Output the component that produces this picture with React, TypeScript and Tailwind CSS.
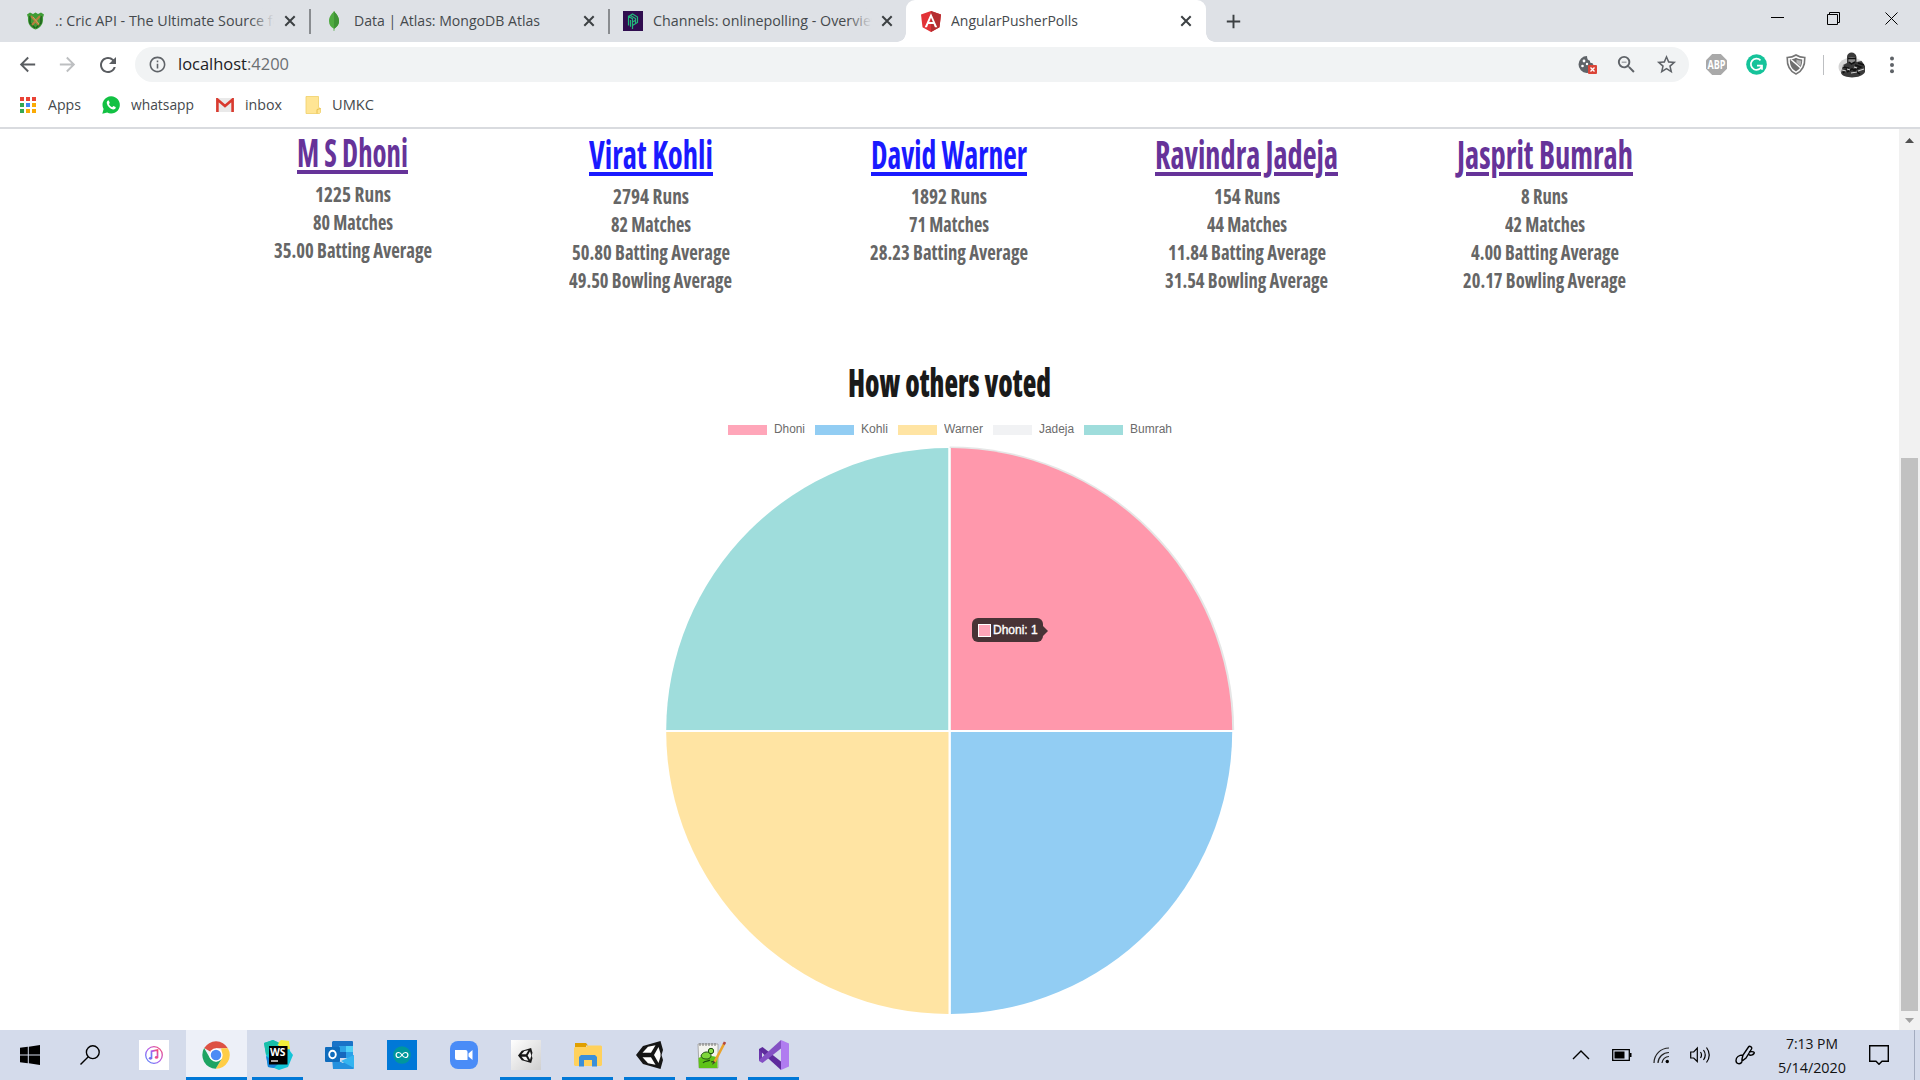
import { useLayoutEffect, useRef, useState, type ReactNode } from "react";
import { MdArrowBack, MdArrowForward, MdRefresh, MdStarBorder, MdZoomOut, MdInfoOutline, MdAdd } from "react-icons/md";

/* Text squeezed or stretched horizontally to an exact width. */
function Fit({ w, className = "", children }: { w: number; className?: string; children: ReactNode }) {
  const ref = useRef<HTMLSpanElement>(null);
  const [k, setK] = useState(1);
  useLayoutEffect(() => {
    if (ref.current && ref.current.offsetWidth) setK(w / ref.current.getBoundingClientRect().width);
  }, []);
  return (
    <span className="block shrink-0" style={{ width: w }}>
      <span ref={ref} className={"inline-block origin-left whitespace-nowrap " + className} style={{ transform: `scaleX(${k})` }}>
        {children}
      </span>
    </span>
  );
}

const UI = "font-['Open_Sans','Noto_Sans',sans-serif]";
const COND = "font-['Open_Sans',sans-serif] [font-stretch:75%]";

function CloseX() {
  return (
    <svg width="12" height="12" viewBox="0 0 12 12" className="shrink-0">
      <path d="M1.3 1.3 10.7 10.7M10.7 1.3 1.3 10.7" stroke="#3c4043" strokeWidth="2" />
    </svg>
  );
}

function CricIcon() {
  return (
    <svg width="17" height="18" viewBox="0 0 17 18">
      <path d="M0 2.500 3 .500l3 1.500L8.500.500 11 2l3-1.500 3 2-1 3c.5 6-2 10-7.500 12C3 15.500.5 11.500 1 5.500z" fill="#3f9c35" />
      <path d="M3 4v7l5 5M14 4v7l-5 5" stroke="#1f5f1c" strokeWidth="1.500" fill="none" />
      <path d="m4 4 8 9M13 4l-8 9" stroke="#b5813f" strokeWidth="2" />
      <path d="m6 5 6 7" stroke="#e0c080" strokeWidth=".6" />
    </svg>
  );
}
function MongoIcon() {
  return (
    <svg width="12" height="20" viewBox="0 0 12 20">
      <path d="M6 0c1 2 5 4.500 5 10 0 4-2.500 6-4.500 7.500L6.300 20h-.6l-.2-2.500C3 16 1 14 1 10 1 4.500 5 2 6 0z" fill="#4faa41" />
      <path d="M6 0c1 2 5 4.500 5 10 0 4-2.500 6-4.500 7.500H6z" fill="#3f9436" />
    </svg>
  );
}
function PusherIcon() {
  return (
    <svg width="20" height="20" viewBox="0 0 20 20">
      <rect width="20" height="20" fill="#300d4f" />
      <g stroke="#21b87a" strokeWidth="1.200" fill="none">
        <path d="M5.500 14.500V5.500l4 2.200V18M7.500 15.700V9M5.500 5.500 9.500 3l5 3v5.500l-5 3M7.500 4.500l5 3v5M9.500 11l3-1.700" />
      </g>
    </svg>
  );
}
function AngularIcon() {
  return (
    <svg width="20" height="21" viewBox="0 0 20 21">
      <path d="M10 0 0 3.600 1.500 16.300 10 21l8.500-4.700L20 3.600z" fill="#e23237" />
      <path d="M10 0v21l8.500-4.700L20 3.600z" fill="#b52e31" />
      <path d="M10 2.300 3.700 16.200H6l1.300-3.200h5.300l1.300 3.200h2.300zm1.900 8.800H8.200L10 6.700z" fill="#fff" />
    </svg>
  );
}

function Tab({ icon, title, w, clip = 240, fade }: { icon: ReactNode; title: string; w: number; clip?: number; fade?: boolean }) {
  return (
    <>
      <span className="flex w-5 shrink-0 justify-center">{icon}</span>
      <div className="relative ml-2.5 -mt-0.5 overflow-hidden" style={{ width: clip }}>
        <Fit w={w} className="text-[14.5px] leading-5 text-[#45494d]">{title}</Fit>
        {fade && <span className="absolute inset-y-0 right-0 w-6 bg-gradient-to-r from-transparent to-[#dee1e6]" />}
      </div>
      <div className="ml-auto">
        <CloseX />
      </div>
    </>
  );
}

function TabStrip() {
  return (
    <div className="flex h-[42px] items-center bg-[#dee1e6]">
      <div className="flex h-[25px] w-[311px] shrink-0 items-center border-r-2 border-[#898c90] pl-[25px] pr-[13px]">
        <Tab icon={<CricIcon />} title=".: Cric API - The Ultimate Source for" w={232} clip={219} fade />
      </div>
      <div className="flex h-[25px] w-[299px] shrink-0 items-center border-r-2 border-[#898c90] pl-[13px] pr-[13px]">
        <Tab icon={<MongoIcon />} title="Data | Atlas: MongoDB Atlas" w={186} />
      </div>
      <div className="flex w-[296px] shrink-0 items-center pl-[13px] pr-[13px]">
        <Tab icon={<PusherIcon />} title="Channels: onlinepolling - Overview" w={229} clip={219} fade />
      </div>
      <div className="relative flex h-full w-[300px] shrink-0 items-center rounded-t-[9px] bg-white pl-[15px] pr-[14px]">
        <span className="absolute -left-[9px] bottom-0 h-[9px] w-[9px] bg-[radial-gradient(circle_at_0_0,#dee1e6_8.5px,#fff_9px)]" />
        <span className="absolute -right-[9px] bottom-0 h-[9px] w-[9px] bg-[radial-gradient(circle_at_100%_0,#dee1e6_8.5px,#fff_9px)]" />
        <Tab icon={<AngularIcon />} title="AngularPusherPolls" w={127} />
      </div>
      <MdAdd className="ml-[16px] text-[23px] text-[#3c4043]" />
      <svg width="136" height="15" viewBox="0 0 136 15" className="ml-auto mb-[5px] mr-[19px]" stroke="#000" strokeWidth="1" fill="none">
        <path d="M6 6.500h13" />
        <path d="M62.500 3.500h10v10h-10zM64.500 3.500v-2h10v10h-2" />
        <path d="m120.500 1.500 12 12M132.500 1.500l-12 12" />
      </svg>
    </div>
  );
}

function Toolbar() {
  return (
    <div className="flex h-[45px] items-center">
      <div className="flex w-[135px] shrink-0 items-center pl-4">
        <MdArrowBack className="text-[23px] text-[#5a5d61]" />
        <MdArrowForward className="ml-[17px] text-[23px] text-[#bdbfc1]" />
        <MdRefresh className="ml-[17px] text-[24px] text-[#5a5d61]" />
      </div>
      <div className="flex h-[35px] w-[1554px] shrink-0 items-center rounded-full bg-[#f1f3f4] pl-[13px] pr-[11px]">
        <MdInfoOutline className="text-[19px] text-[#5f6368]" />
        <div className="ml-[11px] -mt-px flex">
          <Fit w={69} className="text-[17px] leading-6 text-[#202124]">localhost</Fit>
          <Fit w={42} className="text-[17px] leading-6 text-[#6b6f73]">:4200</Fit>
        </div>
        <svg width="20" height="20" viewBox="0 0 20 20" className="ml-auto">
          <path d="M9 1a8.500 8.500 0 1 0 8.500 9c-2 .3-3-.5-3-2-1.800.3-2.800-.5-2.500-2.300C10 5.500 9 4 9 1z" fill="#5f6368" />
          <circle cx="6" cy="6" r="1.400" fill="#fff" />
          <circle cx="4.500" cy="11" r="1.300" fill="#fff" />
          <circle cx="9" cy="9" r="1.200" fill="#fff" />
          <rect x="10" y="10" width="9" height="9" rx="1" fill="#db4437" />
          <path d="m12.500 12.500 4 4m0-4-4 4" stroke="#fff" strokeWidth="1.300" />
        </svg>
        <MdZoomOut className="ml-[17px] text-[23px] text-[#5f6368]" />
        <MdStarBorder className="ml-[17px] text-[23px] text-[#5f6368]" />
      </div>
      <svg width="21" height="21" viewBox="0 0 21 21" className="ml-[17px]">
        <path d="M6.200 0h8.600L21 6.200v8.600L14.800 21H6.200L0 14.800V6.200z" fill="#a9a9a9" />
        <text x="10.500" y="14.600" textAnchor="middle" fontSize="11.500" fontWeight="700" fill="#fff" fontFamily="Open Sans" textLength="18" lengthAdjust="spacingAndGlyphs">ABP</text>
      </svg>
      <svg width="21" height="21" viewBox="0 0 21 21" className="ml-[19px]">
        <circle cx="10.500" cy="10.500" r="10.300" fill="#15c39a" />
        <path d="M14.500 6.300A5.600 5.600 0 1 0 15.800 12M11 11.700h5v4" fill="none" stroke="#fff" strokeWidth="1.700" />
      </svg>
      <svg width="20" height="21" viewBox="0 0 20 21" className="ml-[19px]">
        <path d="M10 1C7 3 4 3.500 1.200 3.500 1 11 3 17 10 20c7-3 9-9 8.800-16.500C16 3.500 13 3 10 1z" fill="#fff" stroke="#757575" strokeWidth="1.600" />
        <path d="M10 3.800C8 4.900 6 5.400 3.800 5.500c0 5.300 1.500 9.300 6.200 11.900 4.700-2.600 6.200-6.600 6.200-11.900C14 5.400 12 4.900 10 3.800z" fill="#6f6f6f" />
        <path d="m5 5.500 9.800 8.500" stroke="#fff" strokeWidth="1.500" />
        <path d="M10.500 5.500v3.200l3.800 3.300c.6-1.500.9-3.200 1-5.300-1.800-.1-3.300-.4-4.800-1.200z" fill="#b5b5b5" />
      </svg>
      <span className="ml-[17px] h-5 w-px bg-[#bdbfc2]" />
      <svg width="27" height="26" viewBox="0 0 27 26" className="ml-[14px]">
        <ellipse cx="13.500" cy="15" rx="13" ry="9.500" fill="#d6d6d6" />
        <path d="M9 5c0-6 9-6 9.500 0v5l5-1 3.500 5v6c-3 7-22 7-24 1l2-8 4-2z" fill="#3a3a3a" />
        <path d="M10.500 5.500c2-.8 4.500-.8 6.500 0v4l-3 3-3.500-3z" fill="#8d8d8d" />
        <path d="M10 6.500h8M11 10l2.500 2 3.500-2M5 15l5 1-5 5M17 13l6 2-7 3M9 20l5-3 8 5M20 11l6 2" stroke="#111" strokeWidth="1.500" fill="none" />
        <path d="m4 18 4 1M13 21l6-1M1 14h5M20 19l6-2M16 15l3 1M9 17l3 1" stroke="#d0d0d0" strokeWidth="1.100" />
      </svg>
      <svg width="4" height="18" viewBox="0 0 4 18" className="ml-[25px]" fill="#5f6368">
        <circle cx="2" cy="2.500" r="2" />
        <circle cx="2" cy="9" r="2" />
        <circle cx="2" cy="15.300" r="2" />
      </svg>
    </div>
  );
}

const appDots = ["#ea4335", "#ea4335", "#ea4335", "#34a853", "#4285f4", "#fbab05", "#34a853", "#fbab05", "#fbab05"];

function Bookmarks() {
  const t = "text-[14.5px] leading-5 text-[#45494d]";
  return (
    <div className="flex h-[42px] items-center border-b-2 border-[#d9dbdf] pb-1 pl-5">
      <svg width="16" height="16" viewBox="0 0 16 16">
        {appDots.map((c, i) => (
          <rect key={i} x={(i % 3) * 6} y={Math.floor(i / 3) * 6} width="4" height="4" fill={c} />
        ))}
      </svg>
      <div className="-mt-[3px] ml-3"><Fit w={33} className={t}>Apps</Fit></div>
      <svg width="18" height="18" viewBox="0 0 18 18" className="ml-[21px]">
        <path d="M9.200.300a8.600 8.600 0 1 1-4 16.200L.300 17.700l1.300-4.600A8.600 8.600 0 0 1 9.200.300z" fill="#12c143" />
        <path d="M6.300 4.500c-1 .2-1.800 1.300-1.500 2.700.6 3 3.300 5.600 6.200 6.200 1.300.2 2.500-.5 2.700-1.700l-.1-.6-2.300-1-1.100 1.100C8.900 10.800 7.500 9.500 6.900 8l.9-1.100-1-2.300z" fill="#fff" />
      </svg>
      <div className="-mt-[3px] ml-[11px]"><Fit w={63} className={t}>whatsapp</Fit></div>
      <svg width="18" height="14" viewBox="0 0 18 14" className="ml-[22px]">
        <rect width="18" height="14" rx="1" fill="#e9e9e9" />
        <path d="M1.400 14V1.500L9 8l7.600-6.500V14" fill="none" stroke="#d93a2f" strokeWidth="2.600" />
      </svg>
      <div className="-mt-[3px] ml-[11px]"><Fit w={37} className={t}>inbox</Fit></div>
      <svg width="16" height="18" viewBox="0 0 16 18" className="ml-[23px]">
        <path d="M1 .5h12.500v11l2 1v4l-1 1H1z" fill="#ffe594" stroke="#f0cf68" strokeWidth=".8" />
        <path d="M12 17.500v-4l3.500-1" fill="none" stroke="#e8c04d" strokeWidth="1" />
      </svg>
      <div className="-mt-[3px] ml-[11px]"><Fit w={42} className={t}>UMKC</Fit></div>
    </div>
  );
}

type Player = { name: string; w: number; visited: boolean; first?: boolean; stats: [string, number][] };
const players: Player[] = [
  { name: "M S Dhoni", w: 111, visited: true, first: true, stats: [["1225 Runs", 76], ["80 Matches", 80], ["35.00 Batting Average", 158]] },
  { name: "Virat Kohli", w: 124, visited: false, stats: [["2794 Runs", 76], ["82 Matches", 80], ["50.80 Batting Average", 158], ["49.50 Bowling Average", 163]] },
  { name: "David Warner", w: 156, visited: false, stats: [["1892 Runs", 76], ["71 Matches", 80], ["28.23 Batting Average", 158]] },
  { name: "Ravindra Jadeja", w: 183, visited: true, stats: [["154 Runs", 66], ["44 Matches", 80], ["11.84 Batting Average", 158], ["31.54 Bowling Average", 163]] },
  { name: "Jasprit Bumrah", w: 176, visited: true, stats: [["8 Runs", 47], ["42 Matches", 80], ["4.00 Batting Average", 148], ["20.17 Bowling Average", 163]] },
];

function PlayerCard({ p }: { p: Player }) {
  return (
    <div className={"flex flex-col items-center " + (p.first ? "" : "pt-0.5")}>
      <div className={"h-[46px] " + (p.visited ? "text-[#663399]" : "text-[#1a1aff]")}>
        <Fit w={p.w} className={COND + " text-[39px] font-bold leading-[46px] underline decoration-4 underline-offset-[3px]"}>{p.name}</Fit>
      </div>
      <div className="mt-[5px] flex flex-col items-center text-[#666]">
        {p.stats.map(([s, w]) => (
          <div key={s} className="h-7">
            <Fit w={w} className={COND + " text-[21px] font-bold leading-7"}>{s}</Fit>
          </div>
        ))}
      </div>
    </div>
  );
}

const legend: [string, string, number][] = [
  ["Dhoni", "bg-[#ffa6b9]", 31],
  ["Kohli", "bg-[#92cdf3]", 27],
  ["Warner", "bg-[#ffe4a3]", 39],
  ["Jadeja", "bg-[#f1f2f4]", 35],
  ["Bumrah", "bg-[#9fdddc]", 42],
];

function Pie() {
  return (
    <div className="relative h-[580px] w-[581px]">
      <svg width="581" height="580" viewBox="0 0 581 580">
        <g transform="translate(290.700 291)">
          <path d="M0-1V-284.500A284.500 284.500 0 0 1 284.500-1z" fill="#e6e6e6" />
          <path d="M1.200-1V-283A283 283 0 0 1 282.500-1z" fill="#ff98ac" />
          <path d="M1.200 1H282.500A283 283 0 0 1 1.200 283z" fill="#92cdf3" />
          <path d="M-1.200 1V283A283 283 0 0 1-283.500 1z" fill="#ffe4a3" />
          <path d="M-1.200-1H-283.500A283 283 0 0 1-1.200-283z" fill="#9fdddc" />
          <path d="M-.2-1V-283" stroke="#fff" strokeWidth="2" />
        </g>
      </svg>
      <div className="absolute left-[313px] top-[178px] flex h-[24px] w-[71px] items-center rounded-[6px] bg-[#483336] pl-1.5">
        <span className="h-[13px] w-[13px] border border-white bg-[#ffa6b9]" />
        <span className="ml-0.5 whitespace-nowrap text-[12px] leading-[14px] text-white [-webkit-text-stroke:0.35px_white]">Dhoni: 1</span>
        <svg width="5" height="10" viewBox="0 0 5 10" className="absolute -right-[5px] top-[8px]">
          <path d="M0 0 5 5 0 10z" fill="#483336" />
        </svg>
      </div>
    </div>
  );
}

function Page() {
  return (
    <div className="flex h-[901px] overflow-hidden">
      <main className="flex w-[1899px] shrink-0 flex-col items-center">
        <div className="mr-0.5 grid h-[230px] w-[1490px] grid-cols-5">
          {players.map((p) => <PlayerCard key={p.name} p={p} />)}
        </div>
        <h2 className="mr-px h-[46px] text-[#1a1a1a]">
          <Fit w={203} className={COND + " text-[39px] font-extrabold leading-[46px]"}>How others voted</Fit>
        </h2>
        <div className="ml-px mt-[14px] flex h-5 items-center gap-[10.500px] font-['Liberation_Sans',sans-serif]">
          {legend.map(([n, c, w]) => (
            <div key={n} className="flex items-center">
              <span className={"mt-0.5 h-[10px] w-[38.5px] " + c} />
              <div className="ml-[7px] -mt-0.5 text-[#6b6b6b]"><Fit w={w} className="text-[12px] leading-4">{n}</Fit></div>
            </div>
          ))}
        </div>
        <div className="mt-px font-['Liberation_Sans',sans-serif]"><Pie /></div>
      </main>
      <div className="flex w-[21px] flex-col items-center bg-[#f1f1f1]">
        <svg width="9" height="5" viewBox="0 0 9 5" className="mt-[9px]"><path d="M0 5 4.500 0 9 5z" fill="#505050" /></svg>
        <div className="mt-[315px] h-[553px] w-[17px] bg-[#c1c1c1]" />
        <svg width="9" height="5" viewBox="0 0 9 5" className="mt-[7px]"><path d="M0 0 4.500 5 9 0z" fill="#a3a3a3" /></svg>
      </div>
    </div>
  );
}

/* Cube emblem made of an outlined, left-pointing prism. */
function UnityMark({ size, fill }: { size: number; fill: string }) {
  return (
    <svg width={size} height={size} viewBox="0 0 28 28">
      <path d="m0 14 7-9 3.500-1L24.500 0 27 9l-1.500 5 1.500 5-2.500 9L10.500 24 7 23z" fill="#161616" />
      <path d="m6.500 11.800 5.500-6 7.500-1.600-4.500 7.600z" fill={fill} />
      <path d="m6.500 16.200h8.500l4.500 7.600L12 22.200z" fill={fill} />
      <path d="m18 14 4.500-8 2 6.500v3L22.500 22z" fill={fill} />
    </svg>
  );
}

const taskIcons: { icon: ReactNode; bar?: boolean; active?: boolean }[] = [
  {
    icon: (
      <svg width="30" height="30" viewBox="0 0 30 30">
        <defs>
          <linearGradient id="it" x1="0" y1="1" x2="1" y2="0"><stop offset="0" stopColor="#4c8dfd" /><stop offset=".5" stopColor="#b35bea" /><stop offset="1" stopColor="#fb4b6b" /></linearGradient>
        </defs>
        <rect width="30" height="30" fill="#fff" />
        <circle cx="15" cy="15" r="8.300" fill="none" stroke="url(#it)" strokeWidth="1.300" />
        <path d="M12.500 18V11.300l6-1.300v7.500" stroke="url(#it)" strokeWidth="1.700" fill="none" />
        <ellipse cx="11.500" cy="18.300" rx="1.700" ry="1.400" fill="#7a6cf0" />
        <ellipse cx="17.500" cy="17.400" rx="1.700" ry="1.400" fill="#f04d8a" />
      </svg>
    ),
  },
  {
    active: true,
    icon: (
      <svg width="28" height="28" viewBox="0 0 48 48">
        <path d="M24 24 3.700 12.200A23.500 23.500 0 0 1 44.400 12.500H24z" fill="#dd5144" />
        <path d="M44.400 12.500A23.500 23.500 0 0 1 23.500 47.500L34 30l-1-17.500z" fill="#ffcd46" />
        <path d="M23.500 47.500A23.500 23.500 0 0 1 3.700 12.200L14 30l10 5 9.500-4z" fill="#1da462" />
        <circle cx="24" cy="24" r="11.500" fill="#fff" />
        <circle cx="24" cy="24" r="9" fill="#4c8bf5" />
      </svg>
    ),
  },
  {
    bar: true,
    icon: (
      <svg width="30" height="30" viewBox="0 0 30 30">
        <path d="M1 3 10 0l7 3 8-1 2 9 3 4-5 12-9 3-5-2-6-1-2-13z" fill="#12c4d8" />
        <path d="m14 4 4-4 8 1 1 8-7 1z" fill="#f2ee3a" />
        <path d="m1 3 9-3 6 3-9 10-4 2z" fill="#18bfa8" />
        <path d="m3 16 2 11 6 1 4-4z" fill="#1582d8" />
        <rect x="6" y="6" width="18.500" height="18.500" fill="#000" />
        <text x="7" y="15.500" fontSize="10" fontWeight="700" fill="#fff" fontFamily="Open Sans" textLength="15.500" lengthAdjust="spacingAndGlyphs">WS</text>
        <path d="M8 21h7" stroke="#fff" strokeWidth="1.300" />
      </svg>
    ),
  },
  {
    icon: (
      <svg width="29" height="28" viewBox="0 0 29 28">
        <path d="M8 0h19a1 1 0 0 1 1 1v15H7V1z" fill="#1a73c7" />
        <path d="M14 5h7v6h-7z" fill="#2da3e6" /><path d="M21 5h7v6h-7z" fill="#50d0f5" />
        <path d="M14 11h7v6h-7z" fill="#1668bd" /><path d="M21 11h7v6h-7z" fill="#2ba0e8" />
        <path d="m7 17 11 5 11-8v13a1 1 0 0 1-1 1H8z" fill="#2491df" />
        <path d="m16 20 13 7V14z" fill="#35b4f0" />
        <rect x="0" y="6" width="15" height="15" rx="1" fill="#0f6cbd" />
        <ellipse cx="7.500" cy="13.500" rx="3.300" ry="3.700" fill="none" stroke="#fff" strokeWidth="1.900" />
      </svg>
    ),
  },
  {
    icon: (
      <svg width="30" height="30" viewBox="0 0 30 30">
        <rect width="30" height="30" fill="#0078d7" />
        <circle cx="15" cy="15" r="8.800" fill="#00979c" />
        <path d="M15 15c-1.300-2-2.200-2.500-3.400-2.500a2.500 2.500 0 0 0 0 5c1.200 0 2.100-.5 3.400-2.500s2.200-2.500 3.400-2.500a2.500 2.500 0 0 1 0 5c-1.200 0-2.100-.5-3.400-2.500z" fill="none" stroke="#fff" strokeWidth="1.200" />
      </svg>
    ),
  },
  {
    icon: (
      <svg width="28" height="28" viewBox="0 0 28 28">
        <rect width="28" height="28" rx="8" fill="#4a8cf7" />
        <path d="M5 9h10.500a2 2 0 0 1 2 2v8H7a2 2 0 0 1-2-2z" fill="#fff" />
        <path d="m18.500 12.500 4-3.500v10l-4-3.500z" fill="#fff" />
      </svg>
    ),
  },
  {
    bar: true,
    icon: (
      <span className="flex h-[30px] w-[30px] items-center justify-center bg-gradient-to-br from-white to-[#cfcfcf]">
        <UnityMark size={15} fill="#f2f2f2" />
      </span>
    ),
  },
  {
    bar: true,
    icon: (
      <svg width="28" height="24" viewBox="0 0 28 24">
        <path d="M1 0h11l2 2.500h-2V6H1z" fill="#e09f00" />
        <path d="M1 4h11l2-1.500h13l1 1V22l-1 1H1l-1-1V5z" fill="#ffd15c" />
        <path d="M5 23V14l2-2h14l2 2v9.500h-5V17h-8v6.500H5z" fill="#3a8fd9" />
      </svg>
    ),
  },
  { bar: true, icon: <UnityMark size={28} fill="#fff" /> },
  {
    bar: true,
    icon: (
      <svg width="29" height="28" viewBox="0 0 29 28">
        <path d="M1 3h20v24H2z" fill="#f4f4ef" stroke="#999" strokeWidth=".8" />
        <path d="M1.500 17c5-3 14-2 19-1v11H2z" fill="#5ec318" />
        <path d="M3 2v3M6 2v3M9 2v3M12 2v3M15 2v3M18 2v3" stroke="#777" strokeWidth="1" />
        <path d="M4 15c1-4 6-5 9-3 2 2 1 5-2 6-3 0-6 0-7-3z" fill="#7ed63a" stroke="#1c4d10" strokeWidth="1" />
        <circle cx="14" cy="10" r="2.700" fill="#8be04a" stroke="#1c4d10" strokeWidth="1" />
        <path d="M6 22c2-3 5-1 7-3M14 21l4-1" fill="none" stroke="#1c4d10" strokeWidth="1.200" />
        <path d="m27 3-9.500 18" stroke="#eaa32b" strokeWidth="2.600" />
        <path d="m28 1-1.300 2.500" stroke="#b4463c" strokeWidth="2.600" />
        <path d="m16.200 20-1 4 3.300-2.700z" fill="#443" />
      </svg>
    ),
  },
  {
    bar: true,
    icon: (
      <svg width="30" height="30" viewBox="0 0 30 30">
        <path d="M0 9h3v12H0z" fill="#6a35ab" />
        <path d="M0 9l3.500-2L22 21.500V30L0 10z" fill="#5e2b9c" />
        <path d="M0 21l3.500 2L22 8.500V0L0 20z" fill="#8451c4" />
        <path d="m22 0 8 3.500v23L22 30z" fill="#b07cf0" />
      </svg>
    ),
  },
];

function Taskbar() {
  return (
    <div className="flex h-[50px] items-stretch bg-[#d4dbeb]">
      <div className="flex w-[123px] shrink-0 items-center pl-5">
        <svg width="20" height="20" viewBox="0 0 20 20"><path d="m0 2.800 7.800-1V9.500H0zM8.800 1.700 20 0v9.500H8.800zM0 10.500h7.800v7.700L0 17.200zM8.800 10.500H20V20L8.800 18.300z" /></svg>
        <svg width="20" height="20" viewBox="0 0 20 20" className="ml-10" fill="none" stroke="#000" strokeWidth="1.400">
          <circle cx="12.800" cy="7.200" r="6.400" /><path d="M8.300 11.700.5 19.500" />
        </svg>
      </div>
      {taskIcons.map((t, i) => (
        <div key={i} className={"relative flex w-[62px] shrink-0 items-center justify-center border-l pr-[2px] " + (t.active ? "border-[#d4dbeb] bg-[#edf0f8]" : "border-transparent")}>
          {t.icon}
          {t.active && <span className="absolute inset-x-0 bottom-0 h-[3px] bg-[#0078d7]" />}
          {t.bar && <span className="absolute bottom-0 left-[4px] right-[6px] h-[3px] bg-[#0078d7]" />}
        </div>
      ))}
      <div className="ml-auto flex items-center">
        <svg width="18" height="10" viewBox="0 0 18 10" fill="none" stroke="#000" strokeWidth="1.400"><path d="m1 9 8-8 8 8" /></svg>
        <svg width="20" height="12" viewBox="0 0 20 12" className="ml-[22px]"><path d="M.7.700h16.600v10.600H.7z" fill="none" stroke="#000" strokeWidth="1.300" /><rect x="2.500" y="2.500" width="10" height="7" /><path d="M18 4h1.500v4H18z" /></svg>
        <svg width="17" height="17" viewBox="0 0 17 17" className="ml-[21px]" fill="none" stroke="#222" strokeWidth="1.200">
          <path d="M1 16A15 15 0 0 1 16 1M5 16A11 11 0 0 1 16 5.500M9 16a7 7 0 0 1 7-6.500" /><circle cx="14.300" cy="14.500" r="1.700" fill="#000" stroke="none" />
        </svg>
        <svg width="21" height="18" viewBox="0 0 21 18" className="ml-[20px]" fill="none" stroke="#000" strokeWidth="1.200">
          <path d="M.7 6h3L7.300 2v13.500L3.700 12h-3zM10.500 6q2 3 0 6M13.500 4q3.500 5 0 10M16.500 1.500q5.500 7.500 0 15" />
        </svg>
        <svg width="21" height="20" viewBox="0 0 21 20" className="ml-[24px]" fill="none" stroke="#000" strokeWidth="1.400">
          <path d="m7 14 1-4 5.500-8c1-1.500 4 0 3 2L11 13l-4 3zM8 10c-4 0-7 2-7 5.500s4 4.500 6 1.500M14 7c4-1 6 0 5 1.500S15 11 14 9.500" />
        </svg>
        <div className="ml-[21px] mb-px flex w-[70px] flex-col items-center text-[#111]">
          <Fit w={52} className="text-[14.5px] leading-[23px]">7:13 PM</Fit>
          <Fit w={68} className="text-[14.5px] leading-[23px]">5/14/2020</Fit>
        </div>
        <svg width="20" height="20" viewBox="0 0 20 20" className="ml-[22px]" fill="none" stroke="#000" strokeWidth="1.400"><path d="M.7.700h18.600v15.600H13l-3 3-3-3H.7z" /></svg>
        <span className="ml-[25px] mr-[5px] h-[50px] w-px bg-[#a3acc0]" />
      </div>
    </div>
  );
}

export default function App() {
  return (
    <div className={"h-[1080px] w-[1920px] overflow-hidden bg-white " + UI}>
      <TabStrip />
      <Toolbar />
      <Bookmarks />
      <Page />
      <Taskbar />
    </div>
  );
}
